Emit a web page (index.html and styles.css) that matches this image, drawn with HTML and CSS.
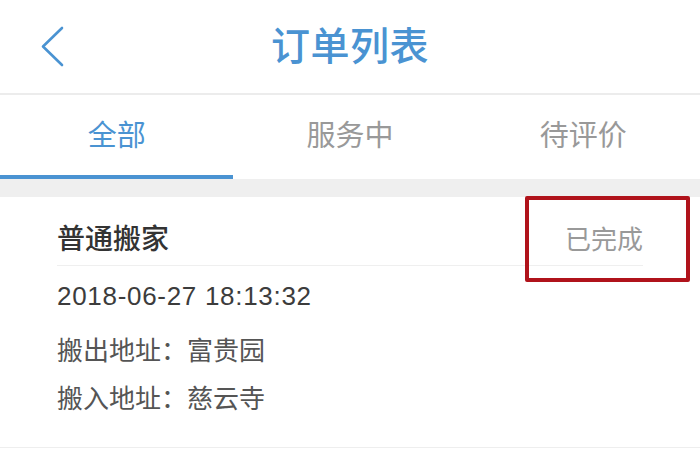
FILE: index.html
```html
<!DOCTYPE html>
<html lang="zh-CN">
<head>
    <meta charset="UTF-8" />
    <meta name="viewport" content="width=device-width, initial-scale=1.0"/>
    <title>订单列表</title>
    <link rel="stylesheet" href="styles.css">
</head>
<body>
<header class="topbar">
    <a class="back" href="#">
        <svg width="24" height="42" viewBox="0 0 24 42">
            <polyline points="21,2 2,20.5 21,39" fill="none" stroke="#4a93d2" stroke-width="2.6" stroke-linecap="round" stroke-linejoin="round"/>
        </svg>
    </a>
    <h1>订单列表</h1>
    <span></span>
</header>

<nav class="tabs">
    <button class="active">全部</button>
    <button>服务中</button>
    <button>待评价</button>
</nav>

<div class="band"></div>

<!-- 订单卡片 -->
<section class="order">
    <div class="order-head">
        <span class="order-type">普通搬家</span>
        <span class="order-status">已完成</span>
    </div>
    <div class="order-time">2018-06-27 18:13:32</div>
    <div class="order-addr">
        <p>搬出地址：富贵园</p>
        <p>搬入地址：慈云寺</p>
    </div>
    <div class="mark"></div>
</section>
</body>
</html>
```

FILE: styles.css
```css
body {
    margin: 0;
    font-family: "Liberation Sans", "Noto Sans CJK SC", sans-serif;
    background: #fff;
    width: 700px;
    height: 454px;
    overflow: hidden;
}

.topbar {
    height: 93px;
    display: grid;
    grid-template-columns: 1fr auto 1fr;
    align-items: center;
    border-bottom: 2px solid #ececec;
}

.back {
    padding-left: 41px;
    display: flex;
    align-items: center;
}

.topbar h1 {
    margin: 0;
    font-size: 39px;
    font-weight: 500;
    color: #4a93d2;
    letter-spacing: 0.5px;
    line-height: 44px;
}

.tabs {
    display: flex;
}

.tabs button {
    flex: 1;
    height: 84px;
    padding: 0 0 4px;
    border: none;
    border-bottom: 4px solid transparent;
    background: #fff;
    font-family: "Noto Sans CJK SC", sans-serif;
    font-size: 29px;
    color: #999;
    cursor: pointer;
}

.tabs button.active {
    color: #4a93d2;
    border-bottom-color: #4a93d2;
}

.band {
    height: 18px;
    background: #efefef;
}

.order {
    position: relative;
    padding: 0 57px 24px;
    border-bottom: 1px solid #eee;
}

.order-head {
    display: flex;
    justify-content: space-between;
    align-items: center;
    padding: 27px 0 9px;
    line-height: 32px;
    border-bottom: 1px solid #efefef;
}

.order-type {
    font-size: 28px;
    font-weight: 500;
    color: #333;
}

.order-status {
    font-size: 26px;
    color: #999;
}

.order-time {
    margin-top: 14px;
    font-size: 26px;
    line-height: 32px;
    letter-spacing: 0.7px;
    color: #3c3c3c;
}

.order-addr {
    margin-top: 15px;
}

.order-addr p {
    margin: 0;
    font-size: 26px;
    line-height: 48px;
    color: #555;
}

/* 标注框 */
.mark {
    position: absolute;
    top: -1px;
    right: 10px;
    width: 157px;
    height: 78px;
    border: 4px solid #b0131b;
    border-radius: 2px;
}
```
